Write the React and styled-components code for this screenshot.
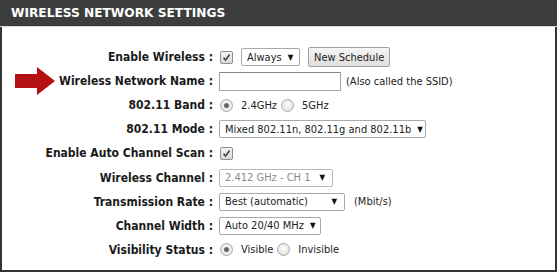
import React from "react";
import styled, { createGlobalStyle } from "styled-components";

const GlobalStyle = createGlobalStyle`
  html, body {
    margin: 0;
    padding: 0;
    background: #ffffff;
  }
`;

const Panel = styled.div`
  width: 557px;
  height: 272px;
  box-sizing: border-box;
  border: 2px solid #353535;
  border-top: none;
  background: #fff;
  display: flex;
  flex-direction: column;
`;

const Header = styled.div`
  height: 26px;
  margin: 0 -2px;
  background: #3c3e3d;
  border-bottom: 1px solid #d8d8d8;
  display: flex;
  align-items: center;
  padding-left: 11px;
  color: #fff;
  font-family: "DejaVu Sans", Verdana, sans-serif;
  font-weight: bold;
  font-size: 12.2px;
`;

const Form = styled.div`
  display: grid;
  grid-template-columns: 211px 1fr;
  grid-auto-rows: 24.1px;
  column-gap: 6px;
  padding-top: 18px;
  align-items: center;
`;

const Label = styled.div`
  display: flex;
  justify-content: flex-end;
  align-items: center;
  font-family: "DejaVu Sans Condensed", "DejaVu Sans", sans-serif;
  font-stretch: condensed;
  font-weight: bold;
  font-size: 12px;
  color: #1a1a1a;
  white-space: nowrap;
`;

const Arrow = styled.svg`
  margin-right: 4px;
  flex: none;
`;

const Controls = styled.div`
  display: flex;
  align-items: center;
  gap: ${(p) => p.gap || 8}px;
  font-family: "DejaVu Sans Condensed", "DejaVu Sans", sans-serif;
  font-stretch: condensed;
  font-size: 11px;
  color: #222;
  white-space: nowrap;
`;

const Check = styled.span`
  width: 11px;
  height: 11px;
  border: 1px solid #8f8f8f;
  border-radius: 2px;
  background: linear-gradient(#f4f4f4, #d8d8d8);
  display: inline-flex;
  align-items: center;
  justify-content: center;
  margin-left: 1px;
`;

const Radio = styled.span`
  width: 11px;
  height: 11px;
  border-radius: 50%;
  border: 1px solid #a8a8a8;
  background: radial-gradient(circle at 50% 40%, #fdfdfd, #dcdcdc);
  display: inline-flex;
  align-items: center;
  justify-content: center;
  margin-left: 1px;
  &::after {
    content: "";
    width: 5px;
    height: 5px;
    border-radius: 50%;
    background: ${(p) => (p.on ? "#666" : "transparent")};
  }
`;

const Choice = styled.span`
  display: inline-flex;
  align-items: center;
  gap: 8px;
`;

const Select = styled.span`
  display: inline-flex;
  align-items: center;
  justify-content: space-between;
  box-sizing: border-box;
  height: 18px;
  width: ${(p) => p.w}px;
  padding: 0 7px 0 5px;
  border: 1px solid ${(p) => (p.disabled ? "#b8b8b8" : "#a9a9a9")};
  border-radius: 2px;
  background: #fff;
  color: ${(p) => (p.disabled ? "#8a8a8a" : "#222")};
  &::after {
    content: "▼";
    font-size: 8px;
    color: #111;
    margin-left: 6px;
  }
`;

const TextInput = styled.span`
  display: inline-block;
  box-sizing: border-box;
  width: 122px;
  height: 19px;
  border: 1px solid #a9a9a9;
  border-top-color: #888;
  background: #fff;
`;

const Button = styled.span`
  display: inline-flex;
  align-items: center;
  box-sizing: border-box;
  height: 20px;
  padding: 0 5px;
  border: 1px solid #a0a0a0;
  border-radius: 2px;
  background: linear-gradient(#f5f5f5, #dedede);
  color: #222;
`;

const Tick = () => (
  <svg width="9" height="9" viewBox="0 0 9 9">
    <path d="M1.5 4.8 L3.6 7 L7.6 1.6" fill="none" stroke="#444" strokeWidth="1.6" />
  </svg>
);

const rows = [
  {
    label: "Enable Wireless :",
    controls: (
      <Controls>
        <Check><Tick /></Check>
        <Select w={59}>Always</Select>
        <Button>New Schedule</Button>
      </Controls>
    ),
  },
  {
    label: "Wireless Network Name :",
    arrow: true,
    controls: (
      <Controls gap={5}>
        <TextInput />
        <span>(Also called the SSID)</span>
      </Controls>
    ),
  },
  {
    label: "802.11 Band :",
    controls: (
      <Controls gap={3}>
        <Choice><Radio on />2.4GHz</Choice>
        <Choice><Radio />5GHz</Choice>
      </Controls>
    ),
  },
  {
    label: "802.11 Mode :",
    controls: (
      <Controls>
        <Select w={207}>Mixed 802.11n, 802.11g and 802.11b</Select>
      </Controls>
    ),
  },
  {
    label: "Enable Auto Channel Scan :",
    controls: (
      <Controls>
        <Check><Tick /></Check>
      </Controls>
    ),
  },
  {
    label: "Wireless Channel :",
    controls: (
      <Controls>
        <Select w={114} disabled>2.412 GHz - CH 1</Select>
      </Controls>
    ),
  },
  {
    label: "Transmission Rate :",
    controls: (
      <Controls gap={9}>
        <Select w={126}>Best (automatic)</Select>
        <span>(Mbit/s)</span>
      </Controls>
    ),
  },
  {
    label: "Channel Width :",
    controls: (
      <Controls>
        <Select w={102}>Auto 20/40 MHz</Select>
      </Controls>
    ),
  },
  {
    label: "Visibility Status :",
    controls: (
      <Controls gap={3}>
        <Choice><Radio on />Visible</Choice>
        <Choice><Radio />Invisible</Choice>
      </Controls>
    ),
  },
];

export default function App() {
  return (
    <>
      <GlobalStyle />
      <Panel>
        <Header>WIRELESS NETWORK SETTINGS</Header>
        <Form>
          {rows.map((r) => (
            <React.Fragment key={r.label}>
              <Label>
                {r.arrow && (
                  <Arrow width="40" height="28" viewBox="0 0 40 28">
                    <path d="M0 7 H22 V0 L40 14 L22 28 V21 H0 Z" fill="#b40f12" />
                  </Arrow>
                )}
                {r.label}
              </Label>
              {r.controls}
            </React.Fragment>
          ))}
        </Form>
      </Panel>
    </>
  );
}
